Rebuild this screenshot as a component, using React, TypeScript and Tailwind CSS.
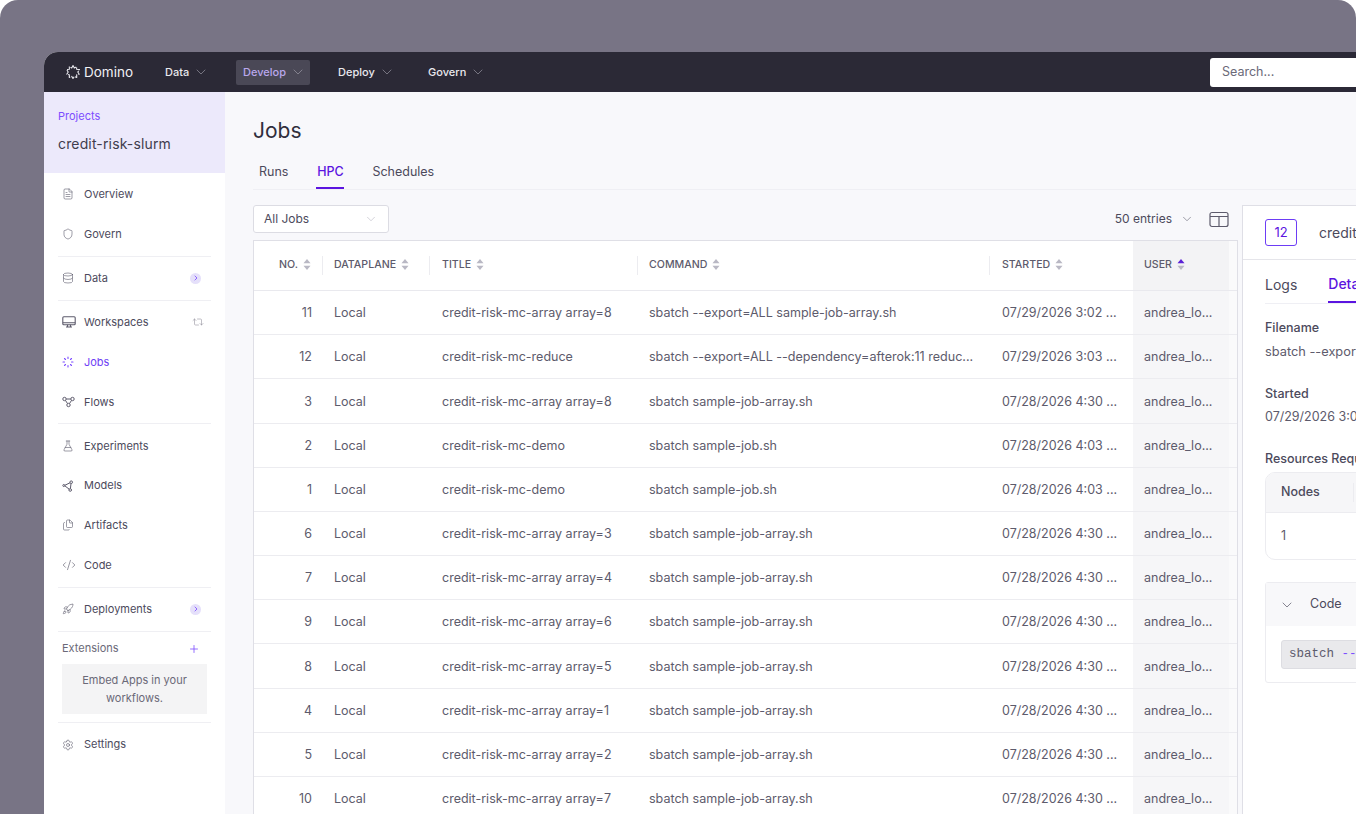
import React from "react";
import { ChevronDown, ChevronRight, CodeXml, Database, FileText, FlaskConical, Files, Plus, Repeat2, Rocket, Settings, Shield } from "lucide-react";

function DominoLogo() {
  return (
    <svg width="16" height="16" viewBox="0 0 16 16" fill="none" stroke="#e9e8ee" strokeWidth="1.1" strokeLinejoin="round">
      <path d="M8 1.500 9.300 4 11.700 2.800 11.600 5.300 14.500 5.600 12.800 8 14.200 10.300 11.700 10.800 11.700 13.500 9.300 12.400 8 14.500 6.700 12.400 4.300 13.500 4.300 10.800 1.800 10.300 3.200 8 1.500 5.600 4.400 5.300 4.300 2.800 6.700 4Z" strokeDasharray="5 1.200" />
    </svg>
  );
}

function JobsIcon() {
  return (
    <svg width="12" height="12" viewBox="0 0 12 12" stroke="#7c4dff" strokeWidth="1.1" strokeLinecap="round">
      <path d="M6 1v1.500M6 9.500V11M1 6h1.500M9.500 6H11M2.500 2.500l1 1M8.500 8.500l1 1M2.500 9.500l1-1M8.500 3.500l1-1" />
    </svg>
  );
}

function MonitorIcon() {
  return (
    <svg width="14" height="12" viewBox="0 0 14 12" fill="none" stroke="currentColor" strokeWidth="1.1">
      <rect x="0.800" y="0.800" width="12.400" height="8" rx="1" />
      <path d="M0.800 6.800h12.400M5.500 8.800v2M8.500 8.800v2M4 11h6" />
    </svg>
  );
}

function FlowsIcon() {
  return (
    <svg width="13" height="12" viewBox="0 0 13 12" fill="none" stroke="currentColor" strokeWidth="1">
      <circle cx="2.500" cy="3" r="1.700" />
      <circle cx="10.500" cy="3" r="1.700" />
      <circle cx="6.500" cy="9" r="1.700" />
      <path d="M4.200 3h4.600M3.500 4.500l2 3M9.500 4.500l-2 3" />
    </svg>
  );
}

function ModelsIcon() {
  return (
    <svg width="12" height="12" viewBox="0 0 12 12" fill="none" stroke="currentColor" strokeWidth="1">
      <circle cx="9.200" cy="2.200" r="1.300" />
      <circle cx="1.800" cy="5.500" r="1" />
      <circle cx="8.200" cy="10" r="1.300" />
      <path d="M8 2.800 2.800 5.300M2.800 5.800 7.200 9.200M9 3.500 8.400 8.700" />
    </svg>
  );
}

function SortIcon({ active }: { active?: boolean }) {
  return (
    <svg width="8" height="13" viewBox="0 0 8 13" className="shrink-0">
      <path d="M4 1 7.500 5.300H.5Z" fill={active ? "#5b21d6" : "#b9b8c4"} />
      <path d="M4 12 7.500 7.700H.5Z" fill="#b9b8c4" />
    </svg>
  );
}

function NavItem({ label, active, w }: { label: string; active?: boolean; w: string }) {
  return (
    <div className={`${w} shrink-0 flex`}>
      <div className={`flex items-center gap-[4px] pl-[7px] pr-[4px] h-[25px] rounded-[2px] text-[11px] font-medium ${active ? "bg-[#4a4856] text-[#b9a7ec]" : "text-[#e9e8ee]"}`}>
        <span>{label}</span>
        <ChevronDown size={16} strokeWidth={0.9} color="#a9a7b4" />
      </div>
    </div>
  );
}

function SideItem({ icon, label, right, active }: { icon: React.ReactNode; label: string; right?: React.ReactNode; active?: boolean }) {
  return (
    <div className={`flex items-center h-[39.7px] pl-[18px] pr-[23px] text-[11px] ${active ? "text-[#6d3df5]" : "text-[#4c4a5c]"}`}>
      <span className="w-[22px] flex items-center text-[#5d5b6c]">{icon}</span>
      <span className="flex-1">{label}</span>
      {right}
    </div>
  );
}

function Badge() {
  return (
    <span className="w-[11px] h-[11px] mr-[1px] rounded-full bg-[#e5e0fa] flex items-center justify-center">
      <ChevronRight size={8} strokeWidth={2.5} color="#7c4dff" />
    </span>
  );
}

function Divider() {
  return <div className="h-px bg-[#efeff3] mx-[14px] my-[1.75px]" />;
}

const rows = [
  ["11", "credit-risk-mc-array array=8", "sbatch --export=ALL sample-job-array.sh", "07/29/2026 3:02 ..."],
  ["12", "credit-risk-mc-reduce", "sbatch --export=ALL --dependency=afterok:11 reduc...", "07/29/2026 3:03 ..."],
  ["3", "credit-risk-mc-array array=8", "sbatch sample-job-array.sh", "07/28/2026 4:30 ..."],
  ["2", "credit-risk-mc-demo", "sbatch sample-job.sh", "07/28/2026 4:03 ..."],
  ["1", "credit-risk-mc-demo", "sbatch sample-job.sh", "07/28/2026 4:03 ..."],
  ["6", "credit-risk-mc-array array=3", "sbatch sample-job-array.sh", "07/28/2026 4:30 ..."],
  ["7", "credit-risk-mc-array array=4", "sbatch sample-job-array.sh", "07/28/2026 4:30 ..."],
  ["9", "credit-risk-mc-array array=6", "sbatch sample-job-array.sh", "07/28/2026 4:30 ..."],
  ["8", "credit-risk-mc-array array=5", "sbatch sample-job-array.sh", "07/28/2026 4:30 ..."],
  ["4", "credit-risk-mc-array array=1", "sbatch sample-job-array.sh", "07/28/2026 4:30 ..."],
  ["5", "credit-risk-mc-array array=2", "sbatch sample-job-array.sh", "07/28/2026 4:30 ..."],
  ["10", "credit-risk-mc-array array=7", "sbatch sample-job-array.sh", "07/28/2026 4:30 ..."],
];

const gridCols = "grid grid-cols-[69px_107px_208px_352px_143px_96px_1fr]";

function Head({ label, active, end }: { label: string; active?: boolean; end?: boolean }) {
  return (
    <div className={`h-full flex items-center gap-[5px] pb-[2px] text-[10.6px] font-medium text-[#5d5b6c] ${end ? "justify-end pr-[11px]" : "pl-[11px]"} ${active ? "bg-[#f3f3f5]" : ""}`}>
      <span>{label}</span>
      <SortIcon active={active} />
    </div>
  );
}

function Sep() {
  return <span className="w-px h-[19px] bg-[#ececf0] shrink-0" />;
}

export default function App() {
  return (
    <div className="w-[1356px] h-[814px] overflow-hidden bg-white" style={{ fontFamily: "Inter, 'Liberation Sans', sans-serif" }}>
      <div className="h-full bg-[#787485] rounded-t-[18px] pl-[44px] pt-[52px] overflow-hidden">
        <div className="h-[762px] w-[1312px] rounded-tl-[14px] overflow-hidden bg-white flex flex-col">
          {/* top bar */}
          <header className="h-[40px] shrink-0 bg-[#2b2936] flex items-center pl-[21px]">
            <DominoLogo />
            <span className="ml-[3px] text-[13.5px] text-[#f1f0f4] w-[48px] whitespace-nowrap">Domino</span>
            <div className="ml-[26px] flex items-center">
              <NavItem label="Data" w="w-[78px]" />
              <NavItem active label="Develop" w="w-[95px]" />
              <NavItem label="Deploy" w="w-[90px]" />
              <NavItem label="Govern" w="w-[90px]" />
            </div>
            <div className="ml-auto w-[146px] h-[29px] bg-white rounded-l-[3px] flex items-center pl-[12px] text-[12.5px] text-[#6b6978]">Search...</div>
          </header>
          <div className="flex flex-1 min-h-0">
            {/* sidebar */}
            <aside className="w-[181px] shrink-0 bg-white flex flex-col">
              <div className="h-[81px] bg-[#ece9fb] pl-[14px] pt-[18px]">
                <div className="text-[11px] leading-[13px] text-[#7c4dff]">Projects</div>
                <div className="mt-[13px] text-[14px] leading-[16px] tracking-[0.15px] text-[#3f3d4d]">credit-risk-slurm</div>
              </div>
              <div className="pt-[1.5px]">
                <SideItem icon={<FileText size={12} strokeWidth={1.2} />} label="Overview" />
                <SideItem icon={<Shield size={12} strokeWidth={1.2} />} label="Govern" />
                <Divider />
                <SideItem icon={<Database size={12} strokeWidth={1.2} />} label="Data" right={<Badge />} />
                <Divider />
                <SideItem icon={<MonitorIcon />} label="Workspaces" right={<Repeat2 size={12} strokeWidth={1.1} color="#8b8996" className="-mr-[2px]" />} />
                <SideItem icon={<JobsIcon />} label="Jobs" active />
                <SideItem icon={<FlowsIcon />} label="Flows" />
                <Divider />
                <SideItem icon={<FlaskConical size={12} strokeWidth={1.2} />} label="Experiments" />
                <SideItem icon={<ModelsIcon />} label="Models" />
                <SideItem icon={<Files size={12} strokeWidth={1.2} />} label="Artifacts" />
                <SideItem icon={<CodeXml size={14} strokeWidth={1.1} />} label="Code" />
                <Divider />
                <SideItem icon={<Rocket size={12} strokeWidth={1.2} />} label="Deployments" right={<Badge />} />
                <Divider />
                <div className="mx-[18px] mt-[8.5px] flex items-center justify-between pr-[7px] text-[11px] text-[#6b6978]">
                  <span>Extensions</span>
                  <Plus size={12} strokeWidth={1.6} color="#7c4dff" />
                </div>
                <div className="mx-[18px] mt-[7px] h-[50px] bg-[#f4f4f5] flex items-center justify-center text-center text-[11px] leading-[18px] text-[#6b6978]">
                  <span>Embed Apps in your<br />workflows.</span>
                </div>
                <div className="h-px bg-[#efeff3] mx-[14px] mt-[8px]" />
                <div className="mt-[2px]">
                  <SideItem icon={<Settings size={12} strokeWidth={1.2} />} label="Settings" />
                </div>
              </div>
            </aside>
            {/* main */}
            <main className="flex-1 min-w-0 bg-[#f8f8fb] pl-[28px] pt-[26px] overflow-hidden">
              <h1 className="text-[21px] leading-[26px] text-[#302e3c]">Jobs</h1>
              <div className="mt-[19px] h-[27px] border-b border-[#efeff4] flex items-start text-[12.5px] leading-[16px] text-[#4c4a5c]">
                <div className="px-[6px] pt-[1px] h-[26px]">Runs</div>
                <div className="ml-[22px] pt-[1px] h-[26px] font-medium text-[#5b14e0] border-b-2 border-[#5b14e0] w-[28px] text-center">HPC</div>
                <div className="ml-[28px] pt-[1px]">Schedules</div>
              </div>
              <div className="flex mt-[15px]">
                <div className="w-[985px] shrink-0">
                  <div className="h-[28px] flex items-center">
                    <div className="w-[136px] h-[28px] border border-[#dcdce3] bg-white rounded-[3px] flex items-center justify-between px-[10px] text-[12px] text-[#4c4a5c]">
                      <span>All Jobs</span>
                      <ChevronDown size={14} strokeWidth={1} color="#b5b4c0" />
                    </div>
                    <div className="ml-auto pr-[9px] flex items-center text-[12px] text-[#4c4a5c]">
                      <span>50 entries</span>
                      <ChevronDown size={14} strokeWidth={1.1} color="#6b6978" className="ml-[8px]" />
                      <svg width="20" height="17" viewBox="0 0 20 17" fill="none" stroke="#5d5b6c" strokeWidth="1.2" className="ml-[15px]">
                        <rect x="1" y="1.5" width="18" height="14" rx="2" />
                        <path d="M1 5.500h18M10 5.500v10" />
                      </svg>
                    </div>
                  </div>
                  <div className="mt-[7px] bg-white border border-[#dfdfe6]">
                    <div className={`${gridCols} h-[50px] border-b border-[#e9e9ee] items-center`}>
                      <div className="h-full flex items-center justify-end">
                        <Head label="NO." end />
                        <Sep />
                      </div>
                      <div className="h-full flex items-center justify-between">
                        <Head label="DATAPLANE" />
                        <Sep />
                      </div>
                      <div className="h-full flex items-center justify-between pl-px">
                        <Head label="TITLE" />
                        <Sep />
                      </div>
                      <div className="h-full flex items-center justify-between">
                        <Head label="COMMAND" />
                        <Sep />
                      </div>
                      <div className="h-full flex items-center justify-between pl-px">
                        <Head label="STARTED" />
                      </div>
                      <Head label="USER" active />
                      <div className="h-full bg-[#fafafb]" />
                    </div>
                    {rows.map((r) => (
                      <div key={r[0]} className={`${gridCols} h-[44.18px] border-b border-[#ececf0] text-[12.5px] text-[#5d5b6c] items-center`}>
                        <div className="text-right pr-[11px] pt-[2px]">{r[0]}</div>
                        <div className="pl-[11px] pt-[2px]">Local</div>
                        <div className="pl-[12px] pt-[2px]">{r[1]}</div>
                        <div className="pl-[11px] pt-[2px] whitespace-nowrap text-[12.55px]">{r[2]}</div>
                        <div className="pl-[12px] pt-[2px] whitespace-nowrap">{r[3]}</div>
                        <div className="h-full pl-[11px] pt-[2px] flex items-center bg-[#f6f6f8]">andrea_lo...</div>
                        <div className="h-full bg-[#fafafb]" />
                      </div>
                    ))}
                  </div>
                </div>
                {/* detail */}
                <section className="ml-[4px] w-[300px] shrink-0 h-[700px] border border-[#dfdfe6] bg-white">
                  <div className="h-[54px] border-b border-[#e5e5ea] flex items-center pl-[22px]">
                    <div className="w-[32px] h-[27px] rounded-[3px] border border-[#6d3df5] flex items-center justify-center text-[13px] text-[#5b14e0]">12</div>
                    <span className="ml-[22px] text-[14px] text-[#4c4a5c]">credit-risk-mc-reduce</span>
                  </div>
                  <div className="mx-[22px] h-[44px] border-b border-[#efeff4] flex items-end text-[14px] leading-[17px] text-[#4c4a5c]">
                    <div className="pb-[10px]">Logs</div>
                    <div className="ml-[31px] pb-[9px] font-medium text-[#5b14e0] border-b-2 border-[#5b14e0] w-[60px]">Details</div>
                  </div>
                  <div className="pl-[22px] text-[12.5px]">
                    <div className="mt-[16px] leading-[16px] font-medium text-[#4c4a5c]">Filename</div>
                    <div className="mt-[8px] leading-[16px] text-[#5d5b6c] whitespace-nowrap text-[12.8px]">sbatch --export=ALL --dependency</div>
                    <div className="mt-[26px] leading-[16px] font-medium text-[#4c4a5c]">Started</div>
                    <div className="mt-[7px] leading-[16px] text-[#5d5b6c]">07/29/2026 3:03 PM</div>
                    <div className="mt-[26px] leading-[16px] font-medium text-[#4c4a5c] whitespace-nowrap">Resources Requested</div>
                    <div className="mt-[5px] border border-[#ececf0] rounded-[10px] overflow-hidden">
                      <div className="h-[40px] bg-[#f6f6f8] border-b border-[#ececf0] pl-[15px] flex items-center font-medium text-[#4c4a5c]">
                        <span className="w-[72px]">Nodes</span>
                        <Sep />
                      </div>
                      <div className="h-[46px] pl-[15px] flex items-center text-[#5d5b6c]">1</div>
                    </div>
                    <div className="mt-[22px] border border-[#ececf0] rounded-[3px]">
                      <div className="h-[43px] bg-[#f8f8fa] flex items-center pl-[13px] text-[#4c4a5c]">
                        <ChevronDown size={16} strokeWidth={1} />
                        <span className="ml-[15px]">Code</span>
                      </div>
                      <div className="h-[56px] flex items-center pl-[15px]">
                        <div className="h-[29px] w-[200px] bg-[#e9e9ec] border border-[#dddde2] rounded-[3px] flex items-center pl-[7px] text-[12.5px] text-[#5d5b6c] whitespace-nowrap" style={{ fontFamily: "'Liberation Mono', monospace" }}>
                          sbatch&nbsp;<span className="text-[#7c4dff]">--export=ALL</span>
                        </div>
                      </div>
                    </div>
                  </div>
                </section>
              </div>
            </main>
          </div>
        </div>
      </div>
    </div>
  );
}
